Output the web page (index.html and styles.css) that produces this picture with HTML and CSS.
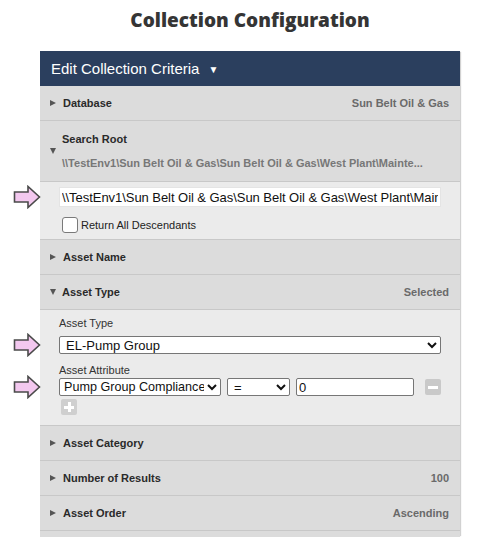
FILE: index.html
```html
<!DOCTYPE html>
<html>
<head>
<meta charset="utf-8">
<link rel="stylesheet" href="styles.css">
</head>
<body>
<div class="page">
  <h1 class="title">Collection Configuration</h1>
  <div class="panel">
    <div class="panel-head">Edit Collection Criteria <span class="head-caret">▼</span></div>

    <div class="row">
      <span class="tri-right"></span>
      <span class="row-title">Database</span>
      <span class="row-value">Sun Belt Oil &amp; Gas</span>
    </div>

    <div class="row row-tall">
      <span class="tri-down"></span>
      <div class="row-stack">
        <span class="row-title">Search Root</span>
        <span class="row-path">\\TestEnv1\Sun Belt Oil &amp; Gas\Sun Belt Oil &amp; Gas\West Plant\Mainte...</span>
      </div>
    </div>

    <div class="content content-root">
      <div class="field-wrap">
        <svg class="pointer" width="28" height="24" viewBox="0 0 28 24"><polygon points="1.5,7 15,7 15,1.5 26.5,12 15,22.5 15,17 1.5,17" fill="#f3c8ef" stroke="#4a4a4a" stroke-width="1.6"/></svg>
        <input class="text-input wide" type="text" value="\\TestEnv1\Sun Belt Oil &amp; Gas\Sun Belt Oil &amp; Gas\West Plant\Maintenance\Pumps">
      </div>
      <label class="check-row"><span class="check-box"></span>Return All Descendants</label>
    </div>

    <div class="row">
      <span class="tri-right"></span>
      <span class="row-title">Asset Name</span>
    </div>

    <div class="row">
      <span class="tri-down"></span>
      <span class="row-title">Asset Type</span>
      <span class="row-value">Selected</span>
    </div>

    <div class="content content-type">
      <div class="field-label">Asset Type</div>
      <div class="field-wrap">
        <svg class="pointer" width="28" height="24" viewBox="0 0 28 24"><polygon points="1.5,7 15,7 15,1.5 26.5,12 15,22.5 15,17 1.5,17" fill="#f3c8ef" stroke="#4a4a4a" stroke-width="1.6"/></svg>
        <select class="sel sel-full"><option>EL-Pump Group</option></select>
      </div>
      <div class="field-label label-attr">Asset Attribute</div>
      <div class="field-wrap attr-row">
        <svg class="pointer" width="28" height="24" viewBox="0 0 28 24"><polygon points="1.5,7 15,7 15,1.5 26.5,12 15,22.5 15,17 1.5,17" fill="#f3c8ef" stroke="#4a4a4a" stroke-width="1.6"/></svg>
        <select class="sel sel-attr"><option>Pump Group Compliance</option></select>
        <select class="sel sel-op"><option>=</option></select>
        <input class="text-input val" type="text" value="0">
        <span class="icon-btn minus"></span>
      </div>
      <span class="icon-btn plus"></span>
    </div>

    <div class="row">
      <span class="tri-right"></span>
      <span class="row-title">Asset Category</span>
    </div>
    <div class="row">
      <span class="tri-right"></span>
      <span class="row-title">Number of Results</span>
      <span class="row-value">100</span>
    </div>
    <div class="row">
      <span class="tri-right"></span>
      <span class="row-title">Asset Order</span>
      <span class="row-value">Ascending</span>
    </div>
    <div class="row row-stub"></div>
  </div>
</div>
</body>
</html>
```

FILE: styles.css
```css
html, body {
  margin: 0;
  padding: 0;
  background: #ffffff;
}

body {
  font-family: "Liberation Sans", Arial, sans-serif;
  color: #333;
  height: 546px;
  overflow: hidden;
}

.page {
  width: 420px;
  margin-left: 40px;
}

.title {
  margin: 0;
  height: 51px;
  box-sizing: border-box;
  padding-top: 8px;
  text-align: center;
  font-family: "Open Sans", sans-serif;
  font-weight: 800;
  font-size: 19px;
  line-height: 24px;
  color: #353535;
}

.panel {
  background: #dcdcdc;
  box-shadow: 2px 0 1px -1px rgba(0, 0, 0, 0.18);
}

.panel-head {
  background: #2b3f5e;
  color: #fff;
  height: 35px;
  display: flex;
  align-items: center;
  padding-left: 11px;
  font-size: 15px;
}

.head-caret {
  font-size: 10px;
  margin-left: 9px;
  margin-top: 1px;
}

.row {
  display: flex;
  align-items: center;
  height: 34px;
  border-bottom: 1px solid #c8c8c8;
  padding: 0 11px 0 10px;
  background: #dcdcdc;
}

.row-tall {
  height: 60px;
}

.row-stub {
  height: 6px;
  border-bottom: none;
}

.tri-right {
  width: 0;
  height: 0;
  border-left: 6px solid #555;
  border-top: 3.5px solid transparent;
  border-bottom: 3.5px solid transparent;
  margin-right: 7px;
}

.tri-down {
  width: 0;
  height: 0;
  border-top: 6px solid #555;
  border-left: 3.5px solid transparent;
  border-right: 3.5px solid transparent;
  margin-right: 6px;
}

.row-title {
  font-weight: 700;
  font-size: 11px;
  color: #2a2a2a;
}

.row-value {
  margin-left: auto;
  font-weight: 700;
  font-size: 11px;
  color: #6a6a6a;
}

.row-stack {
  display: flex;
  flex-direction: column;
  gap: 12px;
  min-width: 0;
  flex: 1;
}

.row-path {
  font-weight: 700;
  font-size: 11px;
  color: #777;
  white-space: nowrap;
}

.content {
  background: #ebebeb;
  border-bottom: 1px solid #c8c8c8;
  padding: 0 19px;
}

.content-root {
  padding-top: 5px;
  padding-bottom: 6px;
}

.content-type {
  padding-top: 7px;
  padding-bottom: 10px;
  display: flex;
  flex-direction: column;
  align-items: flex-start;
}

.field-wrap {
  position: relative;
  display: flex;
  align-items: center;
  width: 100%;
}

.pointer {
  position: absolute;
  left: -46px;
  top: 50%;
  transform: translateY(-50%);
}

.text-input {
  font-family: "Liberation Sans", Arial, sans-serif;
  font-size: 13px;
  color: #111;
  height: 20px;
  box-sizing: border-box;
  border: 1px solid #e4e4e4;
  background: #fff;
  padding: 0 2px;
  margin: 0;
  outline: none;
}

.wide {
  width: 382px;
  letter-spacing: -0.05px;
}

.check-row {
  display: flex;
  align-items: center;
  margin-top: 10px;
  margin-left: 3px;
  font-size: 11px;
  color: #222;
  height: 16px;
}

.check-box {
  width: 14px;
  height: 14px;
  border: 1px solid #7a7a7a;
  border-radius: 3px;
  background: #fff;
  margin-right: 3px;
}

.field-label {
  font-size: 11px;
  color: #333;
  line-height: 13px;
  margin-bottom: 6px;
}

.label-attr {
  margin-top: 10px;
  margin-bottom: 1px;
}

.sel {
  font-family: "Liberation Sans", Arial, sans-serif;
  font-size: 13px;
  color: #111;
  height: 18px;
  box-sizing: border-box;
  border: 1px solid #767676;
  border-radius: 2px;
  background: #fff;
  padding: 0 2px;
  margin: 0;
}

.sel-full {
  width: 384px;
}

.attr-row {
  gap: 6px;
}

.sel-attr {
  width: 162px;
  padding: 0;
  font-size: 12.6px;
}

.sel-op {
  width: 63px;
}

.val {
  width: 118px;
  height: 18px;
  border: 1px solid #767676;
  border-radius: 2px;
}

.icon-btn {
  position: relative;
  display: block;
  width: 16px;
  height: 16px;
  background: #c9c9c9;
  border-radius: 2px;
  flex: none;
}

.minus {
  margin-left: 5px;
}

.minus::before,
.plus::before,
.plus::after {
  content: "";
  position: absolute;
  background: #fff;
}

.minus::before {
  left: 3px;
  right: 3px;
  top: 7px;
  height: 3px;
}

.plus {
  margin-top: 3px;
  margin-left: 2px;
  background: #cfcfcf;
}

.plus::before {
  left: 3px;
  right: 3px;
  top: 6.5px;
  height: 3px;
}

.plus::after {
  top: 3px;
  bottom: 3px;
  left: 6.5px;
  width: 3px;
}
```
